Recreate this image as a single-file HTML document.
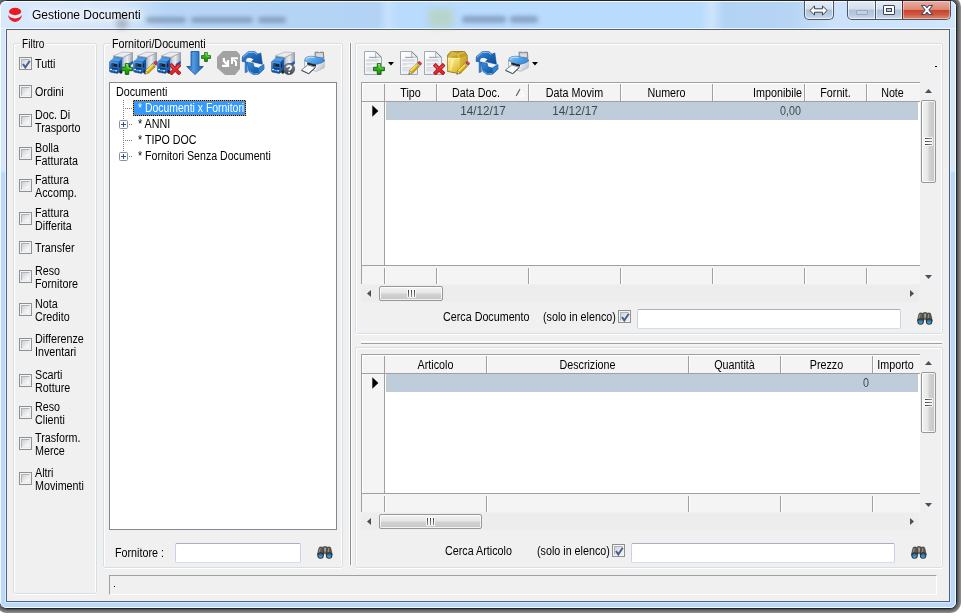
<!DOCTYPE html>
<html>
<head>
<meta charset="utf-8">
<title>Gestione Documenti</title>
<style>
html,body{margin:0;padding:0;background:#fff;}
body{width:964px;height:616px;position:relative;overflow:hidden;font-family:"Liberation Sans",sans-serif;font-size:12px;color:#000;}
#ui *,#win *{position:absolute;box-sizing:border-box;}
#shadow{display:none;}
#win{position:absolute;box-sizing:border-box;left:-1px;top:0;width:958px;height:609px;border-radius:8px 7px 7px 8px;border:1px solid #20242a;
 background:linear-gradient(180deg,#d3e7fc 0px,#d3e7fc 170px,#b8d9fb 172px,#b8d9fb 609px);
 box-shadow:0 0 0 1px #555,0 0 0 2px #696969,0 0 0 3px #7b7b7b,0 0 0 4px #8b8b8b;}
#tbar{left:0;top:0;width:956px;height:28px;border-radius:6px 6px 0 0;background:linear-gradient(90deg,#d9e9fb 0,#d3e5f9 120px,#b7d6f5 165px,#b3d3f4 378px,#c6e1fd 388px,#b9dbfc 398px,#b9dbfc 700px,#cde4fc 712px,#b3d3f3 724px,#b6d5f4 790px,#cbe2fa 835px,#d1e6fb 956px);}
#tbar2{left:0;top:27px;width:956px;height:1px;background:rgba(255,255,255,.5);}
#winhl{left:0;top:0;width:956px;height:607px;border-radius:6px;border:1px solid rgba(255,255,255,.85);}
#title{left:32px;top:7px;z-index:5;font-size:12px;line-height:16px;white-space:nowrap;text-shadow:0 0 5px #fff,0 0 9px #fff,0 0 13px #fff;}
#client{left:6px;top:28px;width:944px;height:573px;background:#f0f0f0;border:1px solid #566274;box-shadow:0 0 0 1px rgba(255,255,255,.45);}
#ui{position:absolute;left:0;top:0;width:964px;height:616px;will-change:transform;}
.t{margin-top:1px;white-space:nowrap;line-height:13px;font-size:12px;transform:scaleX(.895);transform-origin:0 0;}
.tc{transform-origin:50% 0;text-align:center;}
.tr{transform-origin:100% 0;text-align:right;}
.gb{border:1px solid #d5dfe5;border-radius:2.5px;box-shadow:inset 1px 1px 0 #fff,inset -1px 0 0 #fff,0 1px 0 #fff;}
.gbl{background:#f0f0f0;height:13px;}
.cb{width:13px;height:13px;border:1px solid #8e8f8f;background:#f4f4f4;}
.cb:after{content:"";position:absolute;box-sizing:border-box;left:1px;top:1px;width:9px;height:9px;border:1px solid;border-color:#aeb3b9 #e9ebed #e9ebed #aeb3b9;background:linear-gradient(135deg,#cbcfd5,#f6f6f6 80%);}
.cb svg{left:1px;top:1px;z-index:2;}
.inp{background:#fff;border:1px solid;border-color:#a9aebf #c9d1e4 #d6dcea #c9d1e4;border-radius:2px;}
.white{background:#fff;}
</style>
</head>
<body>
<div id="shadow"></div>
<div id="win" style="overflow:visible">
 <div id="tbar"></div><div id="tbar2"></div><div id="winhl"></div>
 <div id="client"></div>
</div>
<div id="ui">
<div id="title">Gestione Documenti</div>
<!--LEFT-->
<div class="gb" style="left:13px;top:43px;width:84px;height:551px"></div>
<div class="gbl" style="left:20px;top:37px;width:26px"></div><div class="t" style="left:22px;top:37px;transform:scaleX(.84)">Filtro</div>
<div class="cb" style="left:19px;top:57px"><svg width="11" height="11" viewBox="0 0 11 11"><path d="M2 5 L4.3 8.4 L8.8 1.8" fill="none" stroke="#4a5f97" stroke-width="2"/></svg></div>
<div class="t" style="left:35px;top:57px">Tutti</div>
<div class="cb" style="left:19px;top:85px"></div>
<div class="t" style="left:35px;top:85px">Ordini</div>
<div class="cb" style="left:19px;top:114px"></div>
<div class="t" style="left:35px;top:108px">Doc. Di</div>
<div class="t" style="left:35px;top:121px">Trasporto</div>
<div class="cb" style="left:19px;top:147px"></div>
<div class="t" style="left:35px;top:141px">Bolla</div>
<div class="t" style="left:35px;top:154px">Fatturata</div>
<div class="cb" style="left:19px;top:179px"></div>
<div class="t" style="left:35px;top:173px">Fattura</div>
<div class="t" style="left:35px;top:186px">Accomp.</div>
<div class="cb" style="left:19px;top:212px"></div>
<div class="t" style="left:35px;top:206px">Fattura</div>
<div class="t" style="left:35px;top:219px">Differita</div>
<div class="cb" style="left:19px;top:241px"></div>
<div class="t" style="left:35px;top:241px">Transfer</div>
<div class="cb" style="left:19px;top:270px"></div>
<div class="t" style="left:35px;top:264px">Reso</div>
<div class="t" style="left:35px;top:277px">Fornitore</div>
<div class="cb" style="left:19px;top:303px"></div>
<div class="t" style="left:35px;top:297px">Nota</div>
<div class="t" style="left:35px;top:310px">Credito</div>
<div class="cb" style="left:19px;top:338px"></div>
<div class="t" style="left:35px;top:332px">Differenze</div>
<div class="t" style="left:35px;top:345px">Inventari</div>
<div class="cb" style="left:19px;top:374px"></div>
<div class="t" style="left:35px;top:368px">Scarti</div>
<div class="t" style="left:35px;top:381px">Rotture</div>
<div class="cb" style="left:19px;top:406px"></div>
<div class="t" style="left:35px;top:400px">Reso</div>
<div class="t" style="left:35px;top:413px">Clienti</div>
<div class="cb" style="left:19px;top:437px"></div>
<div class="t" style="left:35px;top:431px">Trasform.</div>
<div class="t" style="left:35px;top:444px">Merce</div>
<div class="cb" style="left:19px;top:472px"></div>
<div class="t" style="left:35px;top:466px">Altri</div>
<div class="t" style="left:35px;top:479px">Movimenti</div>
<div class="gb" style="left:103px;top:43px;width:240px;height:525px"></div>
<div class="gbl" style="left:110px;top:37px;width:97px"></div><div class="t" style="left:112px;top:37px">Fornitori/Documenti</div>
<div class="white" style="left:109px;top:82px;width:228px;height:448px;border:1px solid #828790"></div>
<div class="t" style="left:116px;top:85px">Documenti</div>
<div style="left:123px;top:100px;width:1px;height:57px;background:repeating-linear-gradient(180deg,#808080 0 1px,transparent 1px 2px)"></div>
<div style="left:124px;top:108px;width:9px;height:1px;background:repeating-linear-gradient(90deg,transparent 0 1px,#808080 1px 2px)"></div>
<div style="left:128px;top:124px;width:5px;height:1px;background:repeating-linear-gradient(90deg,transparent 0 1px,#808080 1px 2px)"></div>
<div style="left:124px;top:140px;width:9px;height:1px;background:repeating-linear-gradient(90deg,transparent 0 1px,#808080 1px 2px)"></div>
<div style="left:128px;top:156px;width:5px;height:1px;background:repeating-linear-gradient(90deg,transparent 0 1px,#808080 1px 2px)"></div>
<div style="left:133px;top:100px;width:113px;height:16px;background:#3399ff"></div><div style="left:133px;top:100px;width:113px;height:1px;background:repeating-linear-gradient(90deg,#ff8a10 0 1px,#111 1px 2px)"></div><div style="left:133px;top:115px;width:113px;height:1px;background:repeating-linear-gradient(90deg,#111 0 1px,#ff8a10 1px 2px)"></div><div style="left:133px;top:100px;width:1px;height:16px;background:repeating-linear-gradient(180deg,#ff8a10 0 1px,#111 1px 2px)"></div><div style="left:245px;top:100px;width:1px;height:16px;background:repeating-linear-gradient(180deg,#ff8a10 0 1px,#111 1px 2px)"></div>
<div class="t" style="left:138px;top:101px;color:#fff;transform:scaleX(.87)">* Documenti x Fornitori</div>
<div class="t" style="left:138px;top:117px">* ANNI</div>
<div class="t" style="left:138px;top:133px;transform:scaleX(.89)">* TIPO DOC</div>
<div class="t" style="left:138px;top:149px;transform:scaleX(.885)">* Fornitori Senza Documenti</div>
<div style="left:119px;top:120px;width:9px;height:9px"><svg width="9" height="9" viewBox="0 0 9 9"><rect x=".5" y=".5" width="8" height="8" rx="1" fill="#fbfbfb" stroke="#919191"/><path d="M2 4.5H7M4.5 2V7" stroke="#2b4fa3" stroke-width="1"/></svg></div>
<div style="left:119px;top:152px;width:9px;height:9px"><svg width="9" height="9" viewBox="0 0 9 9"><rect x=".5" y=".5" width="8" height="8" rx="1" fill="#fbfbfb" stroke="#919191"/><path d="M2 4.5H7M4.5 2V7" stroke="#2b4fa3" stroke-width="1"/></svg></div>
<div class="t" style="left:115px;top:546px">Fornitore :</div>
<div class="inp" style="left:175px;top:543px;width:126px;height:20px"></div>
<div style="left:109px;top:575px;width:828px;height:20px;border:1px solid;border-color:#a0a0a0 #fff #fff #a0a0a0"></div>
<div style="left:114px;top:586px;width:1px;height:1px;background:#000"></div>
<!--/LEFT-->
<!--RIGHT-->
<div style="left:349px;top:43px;width:3px;height:522px;background:#8c8c8c;border-left:1px solid #fff;border-right:1px solid #fff"></div>
<div class="gb" style="left:355px;top:43px;width:588px;height:291px"></div>
<div style="left:361px;top:341px;width:581px;height:4px;background:linear-gradient(180deg,#fff 0 1px,#f8f8f8 1px 2px,#a0a0a0 2px 3px,#f7f7f7 3px 4px)"></div>
<div class="gb" style="left:355px;top:347px;width:588px;height:221px"></div>
<div style="left:935px;top:66px;width:2px;height:1px;background:#000"></div>
<div class="white" style="left:361px;top:82px;width:559px;height:202px;border-left:1px solid #a0a0a0;border-top:1px solid #a0a0a0"></div>
<div style="left:363px;top:84px;width:557px;height:17px;background:#f4f4f4"></div>
<div style="left:363px;top:84px;width:21px;height:200px;background:#f4f4f4"></div>
<div style="left:384px;top:84px;width:1px;height:200px;background:#a0a0a0"></div>
<div style="left:362px;top:101px;width:558px;height:1px;background:#a0a0a0"></div>
<div style="left:362px;top:265px;width:558px;height:19px;background:#f4f4f4;border-top:1px solid #a0a0a0"></div>
<div style="left:384px;top:268px;width:1px;height:16px;background:#a0a0a0"></div>
<div style="left:385px;top:268px;width:1px;height:16px;background:#fff"></div>
<div style="left:436px;top:84px;width:1px;height:17px;background:#a0a0a0"></div>
<div style="left:437px;top:84px;width:1px;height:17px;background:#fff"></div>
<div style="left:437px;top:268px;width:1px;height:16px;background:#fff"></div>
<div style="left:436px;top:268px;width:1px;height:16px;background:#a0a0a0"></div>
<div style="left:528px;top:84px;width:1px;height:17px;background:#a0a0a0"></div>
<div style="left:529px;top:84px;width:1px;height:17px;background:#fff"></div>
<div style="left:529px;top:268px;width:1px;height:16px;background:#fff"></div>
<div style="left:528px;top:268px;width:1px;height:16px;background:#a0a0a0"></div>
<div style="left:620px;top:84px;width:1px;height:17px;background:#a0a0a0"></div>
<div style="left:621px;top:84px;width:1px;height:17px;background:#fff"></div>
<div style="left:621px;top:268px;width:1px;height:16px;background:#fff"></div>
<div style="left:620px;top:268px;width:1px;height:16px;background:#a0a0a0"></div>
<div style="left:712px;top:84px;width:1px;height:17px;background:#a0a0a0"></div>
<div style="left:713px;top:84px;width:1px;height:17px;background:#fff"></div>
<div style="left:713px;top:268px;width:1px;height:16px;background:#fff"></div>
<div style="left:712px;top:268px;width:1px;height:16px;background:#a0a0a0"></div>
<div style="left:804px;top:84px;width:1px;height:17px;background:#a0a0a0"></div>
<div style="left:805px;top:84px;width:1px;height:17px;background:#fff"></div>
<div style="left:805px;top:268px;width:1px;height:16px;background:#fff"></div>
<div style="left:804px;top:268px;width:1px;height:16px;background:#a0a0a0"></div>
<div style="left:866px;top:84px;width:1px;height:17px;background:#a0a0a0"></div>
<div style="left:867px;top:84px;width:1px;height:17px;background:#fff"></div>
<div style="left:867px;top:268px;width:1px;height:16px;background:#fff"></div>
<div style="left:866px;top:268px;width:1px;height:16px;background:#a0a0a0"></div>
<div style="left:386px;top:102px;width:532px;height:18px;background:#bfcddb"></div>
<svg style="left:372px;top:105px" width="7" height="12" viewBox="0 0 7 12"><path d="M0.3 0.3 L6.4 6 L0.3 11.7Z" fill="#000"/></svg>
<div class="t tc" style="left:385px;top:86px;width:51px">Tipo</div>
<div class="t tc" style="left:437px;top:86px;width:78px">Data Doc.</div>
<div class="t tc" style="left:529px;top:86px;width:91px">Data Movim</div>
<div class="t tc" style="left:621px;top:86px;width:91px">Numero</div>
<div class="t tr" style="left:713px;top:86px;width:89px">Imponibile</div>
<div class="t tc" style="left:805px;top:86px;width:61px">Fornit.</div>
<div class="t tc" style="left:867px;top:86px;width:51px">Note</div>
<svg style="left:515px;top:88px" width="10" height="9" viewBox="0 0 10 9"><path d="M5 1L9 8H1.2" stroke="#fff" stroke-width="1.1" fill="none"/><path d="M1.2 8L5 1" stroke="#606060" stroke-width="1.2" fill="none"/></svg>
<div class="t tc" style="left:437px;top:104px;width:92px;color:#3f4852;transform:scaleX(.97)">14/12/17</div>
<div class="t tc" style="left:529px;top:104px;width:92px;color:#3f4852;transform:scaleX(.97)">14/12/17</div>
<div class="t tr" style="left:713px;top:104px;width:88px;color:#3f4852">0,00</div>
<div class="white" style="left:361px;top:354px;width:559px;height:158px;border-left:1px solid #a0a0a0;border-top:1px solid #a0a0a0"></div>
<div style="left:363px;top:356px;width:557px;height:17px;background:#f4f4f4"></div>
<div style="left:363px;top:356px;width:21px;height:156px;background:#f4f4f4"></div>
<div style="left:384px;top:356px;width:1px;height:156px;background:#a0a0a0"></div>
<div style="left:362px;top:373px;width:558px;height:1px;background:#a0a0a0"></div>
<div style="left:362px;top:493px;width:558px;height:19px;background:#f4f4f4;border-top:1px solid #a0a0a0"></div>
<div style="left:384px;top:496px;width:1px;height:16px;background:#a0a0a0"></div>
<div style="left:385px;top:496px;width:1px;height:16px;background:#fff"></div>
<div style="left:486px;top:356px;width:1px;height:17px;background:#a0a0a0"></div>
<div style="left:487px;top:356px;width:1px;height:17px;background:#fff"></div>
<div style="left:487px;top:496px;width:1px;height:16px;background:#fff"></div>
<div style="left:486px;top:496px;width:1px;height:16px;background:#a0a0a0"></div>
<div style="left:688px;top:356px;width:1px;height:17px;background:#a0a0a0"></div>
<div style="left:689px;top:356px;width:1px;height:17px;background:#fff"></div>
<div style="left:689px;top:496px;width:1px;height:16px;background:#fff"></div>
<div style="left:688px;top:496px;width:1px;height:16px;background:#a0a0a0"></div>
<div style="left:780px;top:356px;width:1px;height:17px;background:#a0a0a0"></div>
<div style="left:781px;top:356px;width:1px;height:17px;background:#fff"></div>
<div style="left:781px;top:496px;width:1px;height:16px;background:#fff"></div>
<div style="left:780px;top:496px;width:1px;height:16px;background:#a0a0a0"></div>
<div style="left:872px;top:356px;width:1px;height:17px;background:#a0a0a0"></div>
<div style="left:873px;top:356px;width:1px;height:17px;background:#fff"></div>
<div style="left:873px;top:496px;width:1px;height:16px;background:#fff"></div>
<div style="left:872px;top:496px;width:1px;height:16px;background:#a0a0a0"></div>
<div style="left:386px;top:374px;width:532px;height:18px;background:#bfcddb"></div>
<svg style="left:372px;top:377px" width="7" height="12" viewBox="0 0 7 12"><path d="M0.3 0.3 L6.4 6 L0.3 11.7Z" fill="#000"/></svg>
<div class="t tc" style="left:385px;top:358px;width:101px">Articolo</div>
<div class="t tc" style="left:487px;top:358px;width:201px">Descrizione</div>
<div class="t tc" style="left:689px;top:358px;width:91px">Quantità</div>
<div class="t tc" style="left:781px;top:358px;width:91px">Prezzo</div>
<div class="t tc" style="left:873px;top:358px;width:45px">Importo</div>
<div class="t tr" style="left:781px;top:376px;width:88px;color:#3f4852">0</div>
<div style="left:920px;top:83px;width:17px;height:201px;background:#f0f0f0"></div>
<svg style="left:925px;top:89px" width="7" height="4" viewBox="0 0 7 4"><path d="M0 4L3.5 0L7 4Z" fill="#4a4e55"/></svg>
<svg style="left:925px;top:275px" width="7" height="4" viewBox="0 0 7 4"><path d="M0 0L3.5 4L7 0Z" fill="#4a4e55"/></svg>
<div style="left:921px;top:100px;width:15px;height:83px;border:1px solid #979797;border-radius:2px;background:linear-gradient(90deg,#f3f3f3,#e6e6e6 45%,#d2d2d2 55%,#c6c6c6);box-shadow:inset 0 0 0 1px rgba(255,255,255,.75)"></div>
<div style="left:924px;top:137px;width:9px;height:3px;background:rgba(255,255,255,.8);border-radius:1px"></div>
<div style="left:925px;top:138px;width:7px;height:1px;background:linear-gradient(90deg,#3a3a3a,#8e8e8e)"></div>
<div style="left:924px;top:140px;width:9px;height:3px;background:rgba(255,255,255,.8);border-radius:1px"></div>
<div style="left:925px;top:141px;width:7px;height:1px;background:linear-gradient(90deg,#3a3a3a,#8e8e8e)"></div>
<div style="left:924px;top:143px;width:9px;height:3px;background:rgba(255,255,255,.8);border-radius:1px"></div>
<div style="left:925px;top:144px;width:7px;height:1px;background:linear-gradient(90deg,#3a3a3a,#8e8e8e)"></div>
<div style="left:920px;top:355px;width:17px;height:157px;background:#f0f0f0"></div>
<svg style="left:925px;top:361px" width="7" height="4" viewBox="0 0 7 4"><path d="M0 4L3.5 0L7 4Z" fill="#4a4e55"/></svg>
<svg style="left:925px;top:503px" width="7" height="4" viewBox="0 0 7 4"><path d="M0 0L3.5 4L7 0Z" fill="#4a4e55"/></svg>
<div style="left:921px;top:372px;width:15px;height:61px;border:1px solid #979797;border-radius:2px;background:linear-gradient(90deg,#f3f3f3,#e6e6e6 45%,#d2d2d2 55%,#c6c6c6);box-shadow:inset 0 0 0 1px rgba(255,255,255,.75)"></div>
<div style="left:924px;top:398px;width:9px;height:3px;background:rgba(255,255,255,.8);border-radius:1px"></div>
<div style="left:925px;top:399px;width:7px;height:1px;background:linear-gradient(90deg,#3a3a3a,#8e8e8e)"></div>
<div style="left:924px;top:401px;width:9px;height:3px;background:rgba(255,255,255,.8);border-radius:1px"></div>
<div style="left:925px;top:402px;width:7px;height:1px;background:linear-gradient(90deg,#3a3a3a,#8e8e8e)"></div>
<div style="left:924px;top:404px;width:9px;height:3px;background:rgba(255,255,255,.8);border-radius:1px"></div>
<div style="left:925px;top:405px;width:7px;height:1px;background:linear-gradient(90deg,#3a3a3a,#8e8e8e)"></div>
<div style="left:361px;top:285px;width:558px;height:17px;background:#ededed"></div>
<svg style="left:367px;top:290px" width="4" height="7" viewBox="0 0 4 7"><path d="M4 0L0 3.5L4 7Z" fill="#4a4e55"/></svg>
<svg style="left:910px;top:290px" width="4" height="7" viewBox="0 0 4 7"><path d="M0 0L4 3.5L0 7Z" fill="#4a4e55"/></svg>
<div style="left:379px;top:286px;width:64px;height:15px;border:1px solid #979797;border-radius:2px;background:linear-gradient(180deg,#f3f3f3,#e6e6e6 45%,#d2d2d2 55%,#c6c6c6);box-shadow:inset 0 0 0 1px rgba(255,255,255,.75)"></div>
<div style="left:407px;top:289px;width:3px;height:9px;background:rgba(255,255,255,.8);border-radius:1px"></div>
<div style="left:408px;top:290px;width:1px;height:7px;background:linear-gradient(180deg,#3a3a3a,#8e8e8e)"></div>
<div style="left:410px;top:289px;width:3px;height:9px;background:rgba(255,255,255,.8);border-radius:1px"></div>
<div style="left:411px;top:290px;width:1px;height:7px;background:linear-gradient(180deg,#3a3a3a,#8e8e8e)"></div>
<div style="left:413px;top:289px;width:3px;height:9px;background:rgba(255,255,255,.8);border-radius:1px"></div>
<div style="left:414px;top:290px;width:1px;height:7px;background:linear-gradient(180deg,#3a3a3a,#8e8e8e)"></div>
<div style="left:361px;top:513px;width:558px;height:17px;background:#ededed"></div>
<svg style="left:367px;top:518px" width="4" height="7" viewBox="0 0 4 7"><path d="M4 0L0 3.5L4 7Z" fill="#4a4e55"/></svg>
<svg style="left:910px;top:518px" width="4" height="7" viewBox="0 0 4 7"><path d="M0 0L4 3.5L0 7Z" fill="#4a4e55"/></svg>
<div style="left:379px;top:514px;width:103px;height:15px;border:1px solid #979797;border-radius:2px;background:linear-gradient(180deg,#f3f3f3,#e6e6e6 45%,#d2d2d2 55%,#c6c6c6);box-shadow:inset 0 0 0 1px rgba(255,255,255,.75)"></div>
<div style="left:426px;top:517px;width:3px;height:9px;background:rgba(255,255,255,.8);border-radius:1px"></div>
<div style="left:427px;top:518px;width:1px;height:7px;background:linear-gradient(180deg,#3a3a3a,#8e8e8e)"></div>
<div style="left:429px;top:517px;width:3px;height:9px;background:rgba(255,255,255,.8);border-radius:1px"></div>
<div style="left:430px;top:518px;width:1px;height:7px;background:linear-gradient(180deg,#3a3a3a,#8e8e8e)"></div>
<div style="left:432px;top:517px;width:3px;height:9px;background:rgba(255,255,255,.8);border-radius:1px"></div>
<div style="left:433px;top:518px;width:1px;height:7px;background:linear-gradient(180deg,#3a3a3a,#8e8e8e)"></div>
<div class="t" style="left:443px;top:310px">Cerca Documento</div>
<div class="t" style="left:543px;top:310px">(solo in elenco)</div>
<div class="cb" style="left:618px;top:310px"><svg width="11" height="11" viewBox="0 0 11 11"><path d="M2 5 L4.3 8.4 L8.8 1.8" fill="none" stroke="#4a5f97" stroke-width="2"/></svg></div>
<div class="inp" style="left:637px;top:309px;width:264px;height:20px"></div>
<div class="t" style="left:445px;top:544px">Cerca Articolo</div>
<div class="t" style="left:537px;top:544px">(solo in elenco)</div>
<div class="cb" style="left:612px;top:544px"><svg width="11" height="11" viewBox="0 0 11 11"><path d="M2 5 L4.3 8.4 L8.8 1.8" fill="none" stroke="#4a5f97" stroke-width="2"/></svg></div>
<div class="inp" style="left:631px;top:543px;width:264px;height:20px"></div>
<!--/RIGHT-->
<!--ICONS-->
<svg width="0" height="0" style="left:0;top:0">
<defs>
<linearGradient id="gSilver" x1="0" y1="0" x2="1" y2="0"><stop offset="0" stop-color="#c9ced6"/><stop offset=".45" stop-color="#e8ebef"/><stop offset="1" stop-color="#949aa5"/></linearGradient>
<linearGradient id="gCab" x1="0" y1="0" x2="0" y2="1"><stop offset="0" stop-color="#58a8f0"/><stop offset=".45" stop-color="#2273cc"/><stop offset="1" stop-color="#0d4a9a"/></linearGradient>
<linearGradient id="gGreen" x1="0" y1="0" x2="0" y2="1"><stop offset="0" stop-color="#7be052"/><stop offset=".5" stop-color="#2fae18"/><stop offset="1" stop-color="#1c8a0c"/></linearGradient>
<linearGradient id="gArrow" x1="0" y1="0" x2="1" y2="0"><stop offset="0" stop-color="#1a5db0"/><stop offset=".4" stop-color="#4f9be0"/><stop offset="1" stop-color="#1757a8"/></linearGradient>
<linearGradient id="gPage" x1="0" y1="0" x2="1" y2="1"><stop offset="0" stop-color="#ffffff"/><stop offset="1" stop-color="#e3e9f0"/></linearGradient>
<linearGradient id="gBoxL" x1="0" y1="0" x2=".6" y2="1"><stop offset="0" stop-color="#fdf2a2"/><stop offset=".5" stop-color="#f0d85c"/><stop offset="1" stop-color="#dcb836"/></linearGradient>
<linearGradient id="gBoxR" x1="0" y1="0" x2="1" y2="1"><stop offset="0" stop-color="#e3c244"/><stop offset="1" stop-color="#b58d1a"/></linearGradient>
<linearGradient id="gPrn" x1="0" y1="0" x2="1" y2=".6"><stop offset="0" stop-color="#9bcdf5"/><stop offset=".5" stop-color="#5aa7e8"/><stop offset="1" stop-color="#3585d6"/></linearGradient><linearGradient id="gPrnW" x1="0" y1="0" x2="1" y2="1"><stop offset="0" stop-color="#ffffff"/><stop offset="1" stop-color="#aab1b9"/></linearGradient>
<linearGradient id="gRef" x1="0" y1="0" x2="1" y2="1"><stop offset="0" stop-color="#3f92de"/><stop offset=".5" stop-color="#1c69ba"/><stop offset="1" stop-color="#0c4a96"/></linearGradient>
<linearGradient id="gQ" x1="0" y1="0" x2="0" y2="1"><stop offset="0" stop-color="#8a949f"/><stop offset="1" stop-color="#3f4852"/></linearGradient>
<linearGradient id="gLens" x1="0" y1="0" x2="0" y2="1"><stop offset="0" stop-color="#195a9e"/><stop offset=".55" stop-color="#2b86c4"/><stop offset="1" stop-color="#62c6e8"/></linearGradient>
<symbol id="truck" viewBox="0 0 24 24">
 <polygon points="4.3,4.8 13.6,1.1 23.8,1.6 14.2,6.4" fill="#e9ecf1" stroke="#8e949d" stroke-width=".5"/>
 <polygon points="4.3,4.8 14.2,6.4 14.2,8.4 4.3,7.2" fill="#8f96a1"/>
 <polygon points="14.2,6.4 23.8,1.9 23.8,11.8 14.2,17.8" fill="url(#gSilver)" stroke="#868c96" stroke-width=".5"/>
 <polygon points="18.6,13 23.8,9.8 23.8,13 18.6,16.2" fill="#1d5fb2"/>
 <ellipse cx="20.6" cy="15.6" rx="1.2" ry="1.7" fill="#23272e"/>
 <polygon points="9.2,10.6 13.4,7.4 13.4,20.6 9.2,22" fill="#1556a8"/>
 <polygon points="9.9,13 11.2,12.2 11.2,15.8 9.9,16.4" fill="#15202c"/>
 <ellipse cx="11.9" cy="21" rx="1.6" ry="1.7" fill="#202327"/>
 <polygon points="1.2,10.4 5.3,6.3 13.4,7.3 9.4,11" fill="#4a9eec" stroke="#1c63b6" stroke-width=".4"/>
 <path d="M.4 11.2 Q.8 10 1.8 10.1 L9.3 10.9 V21.6 Q9.1 22.6 8 22.4 L1.6 21.2 Q.4 20.8 .4 19.6Z" fill="url(#gCab)" stroke="#0c3f85" stroke-width=".4"/>
 <polygon points="2.6,12.2 8.3,12.9 8.3,16 2.6,15.3" fill="#16202c"/>
 <polygon points="2.6,12.2 5.2,12.5 3.8,15.4 2.6,15.3" fill="#33475c"/>
 <polygon points="2,16.6 8.4,17.5 8.4,18.4 2,17.5" fill="#0a3570"/>
 <ellipse cx="2.1" cy="18.5" rx="1.1" ry=".8" fill="#e9f2fb"/>
 <ellipse cx="7.1" cy="19.7" rx="1.1" ry=".7" fill="#e9f2fb"/>
 <rect x="3.6" y="19.2" width="2" height=".9" fill="#9fb6cf" transform="rotate(8 4.6 19.6)"/>
</symbol>
<symbol id="plus" viewBox="0 0 12 12">
 <path d="M4.3 .6h3.4v3.7h3.7v3.4h-3.7v3.7h-3.4v-3.7h-3.7v-3.4h3.7z" fill="url(#gGreen)" stroke="#0e6a07" stroke-width="1" stroke-linejoin="round"/>
 <path d="M5 1.4h2v3.7h3.6" fill="none" stroke="#b6f29a" stroke-width=".7" opacity=".8"/>
</symbol>
<symbol id="redx" viewBox="0 0 12 12">
 <path d="M2.6 2.6L9.8 9.8M9.8 2.6L2.6 9.8" stroke="#a3151a" stroke-width="3.9" stroke-linecap="square"/>
 <path d="M2.6 2.6L9.8 9.8M9.8 2.6L2.6 9.8" stroke="#dc2a2f" stroke-width="2.5" stroke-linecap="square"/>
 <path d="M2.4 2.8L4.4 4.8M9.8 2.8L8 4.6" stroke="#f08a8c" stroke-width=".9" stroke-linecap="round" opacity=".8"/>
</symbol>
<symbol id="pencil" viewBox="0 0 14 14">
 <g transform="translate(.7,13.3) rotate(-45)">
  <polygon points="0,0 3.4,-1.9 3.4,1.9" fill="#e9cfa6" stroke="#6b5a3a" stroke-width=".4"/>
  <polygon points="0,0 1.3,-.7 1.3,.7" fill="#2a2a2a"/>
  <rect x="3.4" y="-1.9" width="9.6" height="3.8" fill="#f2c81e" stroke="#7a6310" stroke-width=".5"/>
  <rect x="3.4" y=".4" width="9.6" height="1.5" fill="#c79a10"/>
  <rect x="3.4" y="-1.6" width="9.6" height=".9" fill="#fbe680"/>
  <rect x="13" y="-1.9" width="1.4" height="3.8" fill="#c9ced4" stroke="#6f747a" stroke-width=".4"/>
  <rect x="14.4" y="-1.9" width="2.6" height="3.8" rx="1" fill="#d9383c" stroke="#8a1c1f" stroke-width=".4"/>
 </g>
</symbol>
<symbol id="arrowdn" viewBox="0 0 18 24">
 <path d="M5 .5H13V15.5H17.3L9 23.6L.7 15.5H5Z" fill="url(#gArrow)" stroke="#0f4f9c" stroke-width=".8" stroke-linejoin="round"/>
</symbol>
<symbol id="octa" viewBox="0 0 24 24">
 <polygon points="6,0 19.5,0 23,3.5 23,18 18,24 8,24 0,17 0,6" fill="#a2a2a2"/>
 <path d="M6.9 7 V10 L10.4 13.6" stroke="#fff" stroke-width="2.3" fill="none"/><path d="M5 14.8 H11 V9" fill="none" stroke="#fff" stroke-width="2.2"/>
 <path d="M16.6 8.6 L19 11 V15" stroke="#fff" stroke-width="2" fill="none"/><path d="M21 7.2 H15 V13" fill="none" stroke="#fff" stroke-width="2"/>
</symbol>
<symbol id="refresh" viewBox="0 0 24 24">
 <path d="M1.1 10.4 L1.5 5.4 L7.2 .7 L13.6 .4 L17 3.2 L19.8 1.9 L21.4 13.2 L10.6 10.6 L12.8 8.6 C11 6.2 7 5.8 5.2 7.6 L4.4 10.8Z" fill="url(#gRef)" stroke="#0c4a94" stroke-width=".6" stroke-linejoin="round"/>
 <path d="M2 6 L7.4 1.5 L13.2 1.3 L16 3.6" fill="none" stroke="#9fd0f7" stroke-width=".9" opacity=".9"/>
 <path d="M6 8.2 L9.4 7.2 L8.6 9.2 L6 9.9Z" fill="#eef4fa"/>
 <path d="M4.1 10.8 L6.1 11 L6.3 21 L4.1 21.6Z" fill="#3585d6" stroke="#0c4a94" stroke-width=".5"/>
 <path d="M6.2 11.2 L12.2 12.4 L12.8 15.6 L17.5 16.9 L22.9 13.5 L23.1 18 L17.8 23.1 L12.4 23.7 L8 20.6Z" fill="url(#gRef)" stroke="#0c4a94" stroke-width=".6" stroke-linejoin="round"/>
 <path d="M17.6 17.2 L22.8 14 L23 17.8 L17.8 22.8Z" fill="#2f83d4"/>
 <path d="M13.4 14 L17.6 13.8 L17 16.2 L14 15.8Z" fill="#eef4fa"/>
 <path d="M8.4 20.2 L12.6 23 L17.4 22.4" fill="none" stroke="#8cc6f5" stroke-width=".9" opacity=".8"/>
</symbol>
<symbol id="qmark" viewBox="0 0 12 12">
 <circle cx="6" cy="6" r="5.6" fill="url(#gQ)" stroke="#2c333b" stroke-width=".6"/>
 <path d="M3.9 4.6 C3.9 2.4 8.2 2.3 8.2 4.6 C8.2 6 6.1 6 6.1 7.6" fill="none" stroke="#fff" stroke-width="1.6"/>
 <circle cx="6.1" cy="9.6" r=".95" fill="#fff"/>
</symbol>
<symbol id="printer" viewBox="0 0 24 24">
 <path d="M14 1.2 H17.4 L18.2 2.1 L19 1.2 H22.4 L22.9 7.2 L14.2 6.6Z" fill="#bcc0c5" stroke="#5a6067" stroke-width=".7" stroke-linejoin="round"/>
 <path d="M15.2 2.6 H21.4 L21.8 6 L15.4 5.6Z" fill="#d9dcdf"/>
 <path d="M3.6 9.5 V15 Q3.6 16 4.6 16.4 L14.6 20 Q15.6 20.3 16.6 19.8 L23 16.6 Q23.8 16 23.8 15 V9.5Z" fill="#f3f5f7" stroke="#7d848c" stroke-width=".6" stroke-linejoin="round"/>
 <path d="M15.2 12.8 L23.8 9.8 V15 Q23.8 16 23 16.6 L16.6 19.8 Q15.6 20.3 15.2 20Z" fill="url(#gPrnW)"/>
 <path d="M6.2 11.2 L15 13.2 V15.8 L6.2 13.6Z" fill="#1f242a"/>
 <path d="M3.6 9.8 Q3.4 6.4 7 5.6 Q10.4 4.8 14 5.6 L22 7.4 Q23.8 8 23.8 10 Q21 12.4 15.4 13.4 Q9.6 12.8 3.6 9.8Z" fill="url(#gPrn)" stroke="#2a6fb8" stroke-width=".5" stroke-linejoin="round"/>
 <path d="M5 8.6 Q5.4 6.8 8 6.4 Q11 6 13.6 6.6" fill="none" stroke="#d2e9fb" stroke-width=".9" opacity=".85"/>
 <polygon points=".5,19 6.8,13.9 14.3,16.3 7.6,22.5" fill="#f6f8fa" stroke="#4d545c" stroke-width=".7" stroke-linejoin="round"/>
 <polygon points=".5,19 7.6,22.5 7.7,23.3 .6,19.9" fill="#3d434a"/>
 <polygon points="7.6,22.5 14.3,16.3 14.4,17.1 7.7,23.3" fill="#2b3036"/>
</symbol>
<symbol id="page" viewBox="0 0 18 24">
 <path d="M.5 .5H11.6L17.5 6.2V23.5H.5Z" fill="url(#gPage)" stroke="#a2a8b1" stroke-width="1" stroke-linejoin="miter"/>
 <path d="M11.6 .5V6.2H17.5Z" fill="#eef1f5" stroke="#a2a8b1" stroke-width=".8" stroke-linejoin="round"/>
 <path d="M11.6 .8L17.2 6.2" stroke="#7f858e" stroke-width=".9"/>
 <path d="M5 6.4H12.6" stroke="#8c9198" stroke-width=".9"/>
 <rect x="2.2" y="8.2" width="12.4" height="2.3" fill="#d6d9de"/>
 <rect x="2.2" y="12.1" width="12.4" height="1.2" fill="#d6d9de"/><rect x="2.2" y="13.3" width="5" height="1.1" fill="#d6d9de"/>
 <rect x="2.2" y="16" width="12.4" height="4.4" fill="#d9dce1"/>
 <path d="M2.2 17.5H14.6M2.2 19H14.6" stroke="#eceef1" stroke-width=".5"/>
</symbol>
<symbol id="ybox" viewBox="0 0 21 23">
 <path d="M.4 4.4 L4 .3 L17.6 .5 L20.2 4.4 V13.4 L13 22.7 L.4 20.4Z" fill="#caa526" stroke="#7f6412" stroke-width=".8" stroke-linejoin="round"/>
 <path d="M.8 4.8 L4.2 .8 L17.4 1 L19.8 4.6 L12.8 7.6 L.8 7Z" fill="#c6a022"/>
 <path d="M4.2 .8 L10.6 3.7 L17.4 1 M10.6 3.7 L12.8 7.6" fill="none" stroke="#f0dc86" stroke-width=".7"/>
 <path d="M4.2 .8 L10.6 3.7 L.8 7Z" fill="#d8b638"/>
 <path d="M12.8 7.6 L19.8 4.6 V13.2 L13 22.2Z" fill="url(#gBoxR)"/>
 <path d="M.8 7 L12.8 7.6 L13 22.2 L.8 20Z" fill="url(#gBoxL)"/>
 <path d="M.8 7 L12.8 7.6" stroke="#fffbe0" stroke-width=".8"/>
 <path d="M4.6 8 L7.4 8.2 L4.2 19.6 L2.4 19.2Z" fill="#fffbe0" opacity=".45"/>
</symbol>
<symbol id="binoc" viewBox="0 0 17 13">
 <path d="M6 1 Q8 -.4 10.2 1 L10.6 7.4 H5.6Z" fill="#6d6961" stroke="#3a3732" stroke-width=".5"/>
 <path d="M7.4 2 H8.9 L8.7 5.4 L8.1 6 L7.5 5.4Z" fill="#b4b0a8"/>
 <path d="M2 2 Q2.2 1.2 3 1.1 L4.8 1 Q5.5 1 5.6 1.8 L6.9 8.6 L.4 8.8Z" fill="#625e56" stroke="#2a2723" stroke-width=".6" stroke-linejoin="round"/>
 <path d="M13.7 2 Q13.5 1.2 12.7 1.1 L11 1 Q10.3 1 10.3 1.8 L9 8.6 L15.3 8.8Z" fill="#625e56" stroke="#2a2723" stroke-width=".6" stroke-linejoin="round"/>
 <path d="M3.2 2 L2 7" stroke="#9a968d" stroke-width=".9"/><path d="M11.6 2 L11.2 7" stroke="#9a968d" stroke-width=".9"/>
 <circle cx="3.6" cy="9.5" r="3.2" fill="#2e2b27"/><circle cx="12.1" cy="9.5" r="3.2" fill="#2e2b27"/>
 <circle cx="3.6" cy="9.5" r="2.3" fill="url(#gLens)"/><circle cx="12.1" cy="9.5" r="2.3" fill="url(#gLens)"/>
</symbol>
</defs>
</svg>

<svg style="left:109px;top:51px" width="24" height="24"><use href="#truck" width="24" height="24"/></svg>
<svg style="left:121px;top:63px" width="12" height="12"><use href="#plus" width="12" height="12"/></svg>
<svg style="left:133px;top:51px" width="24" height="24"><use href="#truck" width="24" height="24"/></svg>
<svg style="left:144px;top:61px" width="14" height="14"><use href="#pencil" width="14" height="14"/></svg>
<svg style="left:157px;top:51px" width="24" height="24"><use href="#truck" width="24" height="24"/></svg>
<svg style="left:169px;top:63px" width="12" height="12"><use href="#redx" width="12" height="12"/></svg>
<svg style="left:186px;top:51px" width="18" height="24"><use href="#arrowdn" width="18" height="24"/></svg>
<svg style="left:201px;top:52px" width="10" height="10"><use href="#plus" width="10" height="10"/></svg>
<svg style="left:217px;top:51px" width="24" height="24"><use href="#octa" width="24" height="24"/></svg>
<svg style="left:241px;top:51px" width="24" height="24"><use href="#refresh" width="24" height="24"/></svg>
<svg style="left:271px;top:51px" width="24" height="24"><use href="#truck" width="24" height="24"/></svg>
<svg style="left:283px;top:63px" width="12" height="12"><use href="#qmark" width="12" height="12"/></svg>
<svg style="left:301px;top:51px" width="24" height="24"><use href="#printer" width="24" height="24"/></svg>
<svg style="left:364px;top:51px" width="18" height="24"><use href="#page" width="18" height="24"/></svg>
<svg style="left:373px;top:63px" width="12" height="12"><use href="#plus" width="12" height="12"/></svg>
<svg style="left:388px;top:62px" width="6" height="4" viewBox="0 0 6 4"><path d="M0 0H6L3 3.5Z" fill="#000"/></svg>
<svg style="left:400px;top:51px" width="18" height="24"><use href="#page" width="18" height="24"/></svg>
<svg style="left:408px;top:61px" width="14" height="14"><use href="#pencil" width="14" height="14"/></svg>
<svg style="left:424px;top:51px" width="18" height="24"><use href="#page" width="18" height="24"/></svg>
<svg style="left:433px;top:63px" width="12" height="12"><use href="#redx" width="12" height="12"/></svg>
<svg style="left:447px;top:51px" width="21" height="23"><use href="#ybox" width="21" height="23"/></svg>
<svg style="left:456px;top:61px" width="14" height="14"><use href="#pencil" width="14" height="14"/></svg>
<svg style="left:475px;top:51px" width="24" height="24"><use href="#refresh" width="24" height="24"/></svg>
<svg style="left:505px;top:51px" width="24" height="24"><use href="#printer" width="24" height="24"/></svg>
<svg style="left:532px;top:62px" width="6" height="4" viewBox="0 0 6 4"><path d="M0 0H6L3 3.5Z" fill="#000"/></svg>
<svg style="left:317px;top:546px" width="17" height="13"><use href="#binoc" width="17" height="13"/></svg>
<svg style="left:917px;top:312px" width="17" height="13"><use href="#binoc" width="17" height="13"/></svg>
<svg style="left:911px;top:546px" width="17" height="13"><use href="#binoc" width="17" height="13"/></svg>
<!--/ICONS-->
<!--CHROME-->
<div style="left:117px;top:14px;width:10px;height:14px;background:#4a5566;opacity:0.45;filter:blur(3px);border-radius:3px"></div>
<div style="left:146px;top:17px;width:40px;height:6px;background:#44587a;opacity:0.42;filter:blur(2.2px);border-radius:3px"></div>
<div style="left:191px;top:17px;width:62px;height:6px;background:#44587a;opacity:0.42;filter:blur(2.2px);border-radius:3px"></div>
<div style="left:258px;top:17px;width:28px;height:6px;background:#44587a;opacity:0.42;filter:blur(2.2px);border-radius:3px"></div>
<div style="left:429px;top:9px;width:24px;height:18px;background:#b9cf9e;opacity:0.55;filter:blur(3.5px);border-radius:3px"></div>
<div style="left:462px;top:16px;width:44px;height:7px;background:#44587a;opacity:0.42;filter:blur(2.2px);border-radius:3px"></div>
<div style="left:510px;top:16px;width:28px;height:7px;background:#44587a;opacity:0.42;filter:blur(2.2px);border-radius:3px"></div>
<svg style="left:7px;top:7px" width="16" height="16" viewBox="0 0 16 16"><ellipse cx="8.1" cy="4.5" rx="6.1" ry="3.7" fill="#ea1a22"/><path d="M.9 6.8 A7.1 8.2 0 0 0 15.1 6.8 A7.1 4.6 0 0 1 .9 6.8Z" fill="#ea1a22"/></svg>
<div style="left:804px;top:1px;width:30px;height:19px;border:1px solid #4b5768;border-top:none;border-radius:0 0 5px 5px;background:linear-gradient(180deg,#e4ecf6 0,#d3dfee 45%,#aec2db 50%,#b7cae0 75%,#cddbeb 100%);box-shadow:inset 0 0 0 1px rgba(255,255,255,.65)"></div>
<svg style="left:809px;top:5px" width="19" height="11" viewBox="0 0 19 11"><path d="M0.8 5.5 L5.5 1 V3.8 H13.5 V1 L18.2 5.5 L13.5 10 V7.2 H5.5 V10Z" fill="#fff" stroke="#3a4350" stroke-width="1" stroke-linejoin="round"/></svg>
<div style="left:847px;top:1px;width:104px;height:19px;border:1px solid #4b5768;border-top:none;border-radius:0 0 5px 5px;background:linear-gradient(180deg,#e4ecf6 0,#d3dfee 45%,#aec2db 50%,#b7cae0 75%,#cddbeb 100%);box-shadow:inset 0 0 0 1px rgba(255,255,255,.65)"></div>
<div style="left:875px;top:1px;width:1px;height:18px;background:#4b5768"></div><div style="left:876px;top:1px;width:1px;height:18px;background:rgba(255,255,255,.6)"></div><div style="left:874px;top:1px;width:1px;height:18px;background:rgba(255,255,255,.6)"></div>
<div style="left:902px;top:1px;width:1px;height:18px;background:#5a2a2a"></div><div style="left:901px;top:1px;width:1px;height:18px;background:rgba(255,255,255,.6)"></div>
<div style="left:903px;top:1px;width:47px;height:18px;border-radius:0 0 4px 0;background:linear-gradient(180deg,#eaada0 0,#dc8977 47%,#c6412b 50%,#cf5840 75%,#e08d70 100%);box-shadow:inset 0 0 0 1px rgba(255,255,255,.38)"></div>
<div style="left:856px;top:10px;width:12px;height:5px;background:#c6d1de;border:1px solid #9aa9bd;border-radius:1px"></div>
<div style="left:883px;top:5px;width:12px;height:10px;background:#fff;border:1px solid #3a4350;border-radius:1px"></div>
<div style="left:886px;top:8px;width:6px;height:4px;background:#b9cbe0;border:1px solid #3a4350"></div>
<svg style="left:920px;top:4px" width="14" height="12" viewBox="-1 -1 14 12"><path d="M.5 .5 H4.1 L6 2.7 L7.9 .5 H11.5 L7.9 5 L11.5 9.5 H7.9 L6 7.3 L4.1 9.5 H.5 L4.1 5Z" fill="#fff" stroke="#434c66" stroke-width="1.1" stroke-linejoin="round"/></svg>
<!--/CHROME-->
</div>
</body>
</html>
